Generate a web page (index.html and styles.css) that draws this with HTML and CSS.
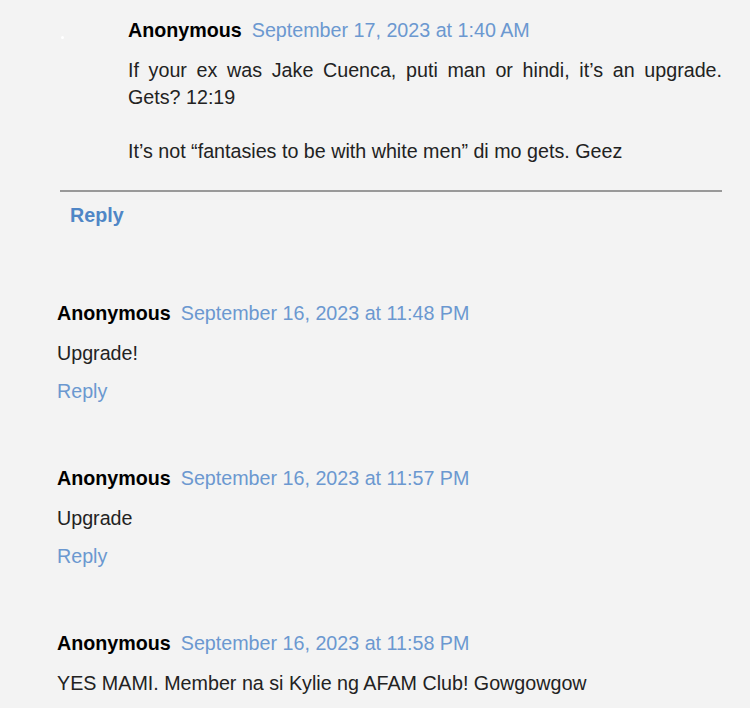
FILE: index.html
```html
<!DOCTYPE html>
<html lang="en">
<head>
    <meta charset="UTF-8">
    <meta name="viewport" content="width=device-width, initial-scale=1.0">
    <title>Comments</title>
    <link rel="stylesheet" href="styles.css">
</head>
<body>
    <div class="thread">
        <span class="dot"></span>
        <div class="comment nested">
            <div class="comment-header">
                <span class="author">Anonymous</span>
                <a class="date" href="#">September 17, 2023 at 1:40 AM</a>
            </div>
            <p class="comment-body justify">If your ex was Jake Cuenca, puti man or hindi, it’s an upgrade. Gets? 12:19<br><br>It’s not “fantasies to be with white men” di mo gets. Geez</p>
        </div>
        <hr class="thread-rule">
        <a class="thread-reply" href="#">Reply</a>
    </div>

    <div class="comments">
        <div class="comment">
            <div class="comment-header">
                <span class="author">Anonymous</span>
                <a class="date" href="#">September 16, 2023 at 11:48 PM</a>
            </div>
            <p class="comment-body">Upgrade!</p>
            <a class="reply" href="#">Reply</a>
        </div>
        <div class="comment">
            <div class="comment-header">
                <span class="author">Anonymous</span>
                <a class="date" href="#">September 16, 2023 at 11:57 PM</a>
            </div>
            <p class="comment-body">Upgrade</p>
            <a class="reply" href="#">Reply</a>
        </div>
        <div class="comment">
            <div class="comment-header">
                <span class="author">Anonymous</span>
                <a class="date" href="#">September 16, 2023 at 11:58 PM</a>
            </div>
            <p class="comment-body">YES MAMI. Member na si Kylie ng AFAM Club! Gowgowgow</p>
        </div>
    </div>
</body>
</html>
```

FILE: styles.css
```css
body {
    margin: 0;
    background-color: #f3f3f3;
    font-family: "Liberation Sans", Arial, sans-serif;
    font-size: 19.7px;
    line-height: 27px;
    color: #222;
}
a {
    text-decoration: none;
}
.thread {
    position: relative;
    padding: 17px 28px 0 60px;
}
.dot {
    position: absolute;
    left: 61px;
    top: 36px;
    width: 3px;
    height: 3px;
    border-radius: 50%;
    background-color: #fff;
}
.comment-header {
    display: flex;
    gap: 10px;
}
.author {
    font-weight: bold;
    color: #000;
}
.date {
    color: #6b98d0;
}
.comment-body {
    margin: 13px 0 0;
}
.justify {
    text-align: justify;
}
.thread-rule {
    margin: 25px 0 0;
    border: none;
    height: 2px;
    background-color: #999;
}
.thread-reply {
    display: block;
    margin: 10px 0 0 10px;
    font-weight: bold;
    color: #4f86c6;
}
.comments {
    padding: 71px 0 0 57px;
}
.comment {
    margin-bottom: 60px;
}
.nested {
    margin-bottom: 0;
    padding-left: 68px;
}
.reply {
    display: block;
    margin-top: 11px;
    color: #6b98d0;
}
```
